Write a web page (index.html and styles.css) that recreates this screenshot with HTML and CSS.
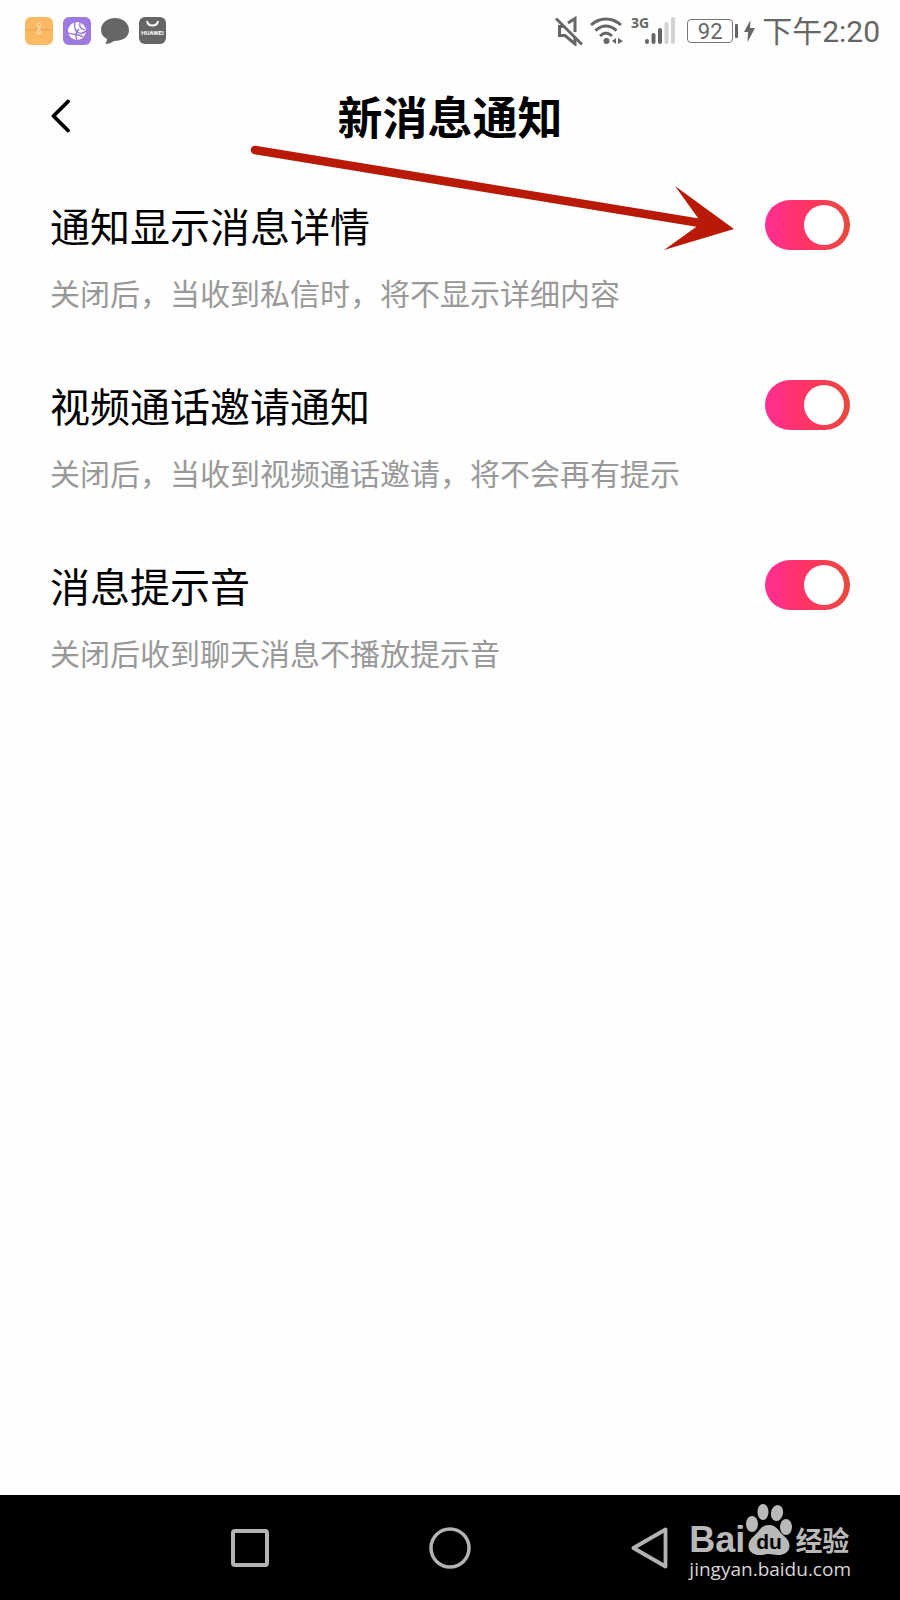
FILE: index.html
```html
<!DOCTYPE html>
<html lang="zh-CN">
<head>
    <meta charset="UTF-8">
    <meta name="viewport" content="width=device-width, initial-scale=1.0">
    <title>新消息通知</title>
    <link rel="stylesheet" href="styles.css">
</head>
<body>

    <div class="status-bar">
        <div class="status-apps">
            <svg width="28" height="28" viewBox="0 0 28 28">
                <rect width="28" height="28" rx="6" fill="#fbb962"/>
                <path d="M0 13h28" stroke="#dda65f"/>
                <g fill="none" stroke="#ffe3bb">
                    <circle cx="14" cy="8" r="2"/>
                    <circle cx="14" cy="15" r="2"/>
                    <path d="M14 10v3"/>
                </g>
            </svg>
            <svg width="28" height="28" viewBox="0 0 28 28">
                <rect width="28" height="28" rx="6" fill="#9d7ae0"/>
                <circle cx="14" cy="14" r="9" fill="#fff"/>
                <path d="M12 5c-1 6 1 10 4 11 3 1 5 0 7-2M17 6c-1 4 1 6 5 7M5 16c6 2 11 1 15 4M14 23c-2-4-1-8 2-11" fill="none" stroke="#8c66d4" stroke-width="1.2"/>
            </svg>
            <svg width="28" height="28" viewBox="0 0 28 28">
                <path d="M14 1C6 1 0 6 0 13c0 4 2 7 6 9 0 2-1 4-2 5 4 0 6-1 9-3 9 0 15-4 15-11S22 1 14 1z" fill="#666"/>
            </svg>
            <svg width="27" height="28" viewBox="0 0 27 28">
                <rect width="27" height="27" rx="6" fill="#666"/>
                <path d="M8 4c1 6 10 6 11 0" fill="none" stroke="#fff" stroke-width="1.8"/>
                <text x="13.5" y="18" class="huawei">HUAWEI</text>
            </svg>
        </div>

        <div class="status-info">
            <svg width="28" height="30" viewBox="0 0 28 30">
                <g fill="none" stroke="#666" stroke-width="3">
                    <path d="M8 10.500H4.500v9H10l10 8.500v-7M13 7l7-4.500V16"/>
                    <path d="M1 2.500l26 26"/>
                </g>
            </svg>
            <svg class="wifi" width="34" height="30" viewBox="0 0 34 30">
                <g fill="none" stroke="#666" stroke-width="3">
                    <path d="M1 9c9-8 21-8 30 0M5.500 14.500c7-6 14-6 21 0M10 20c4-4 8-4 12 0"/>
                </g>
                <circle cx="16.500" cy="25" r="3" fill="#666"/>
                <path d="M26 22v6l-4-3zM28 22v6l5-3z" fill="#666"/>
            </svg>
            <svg class="signal" width="46" height="42" viewBox="-2 -6 46 42">
                <text x="0" y="12" class="network">3G</text>
                <g stroke="#666" stroke-width="4" stroke-linecap="round">
                    <path d="M16 25v1M22.500 19v7M29 14v12"/>
                    <path d="M35.500 8v18M42 3v23" stroke="#d2d2d2"/>
                </g>
            </svg>
            <div class="battery">92</div>
            <svg class="bolt" width="11" height="24" viewBox="0 0 11 24">
                <path d="M6.500 1L0 13h4L3.500 23 11 9H6z" fill="#666"/>
            </svg>
            <span class="clock">下午2:20</span>
        </div>
    </div>

    <header class="header">
        <button class="back" aria-label="返回">
            <svg width="20" height="34" viewBox="0 0 20 34">
                <path d="M18 2.500L3.500 17 18 31.500" fill="none" stroke="#000" stroke-width="3.800" stroke-linecap="round" stroke-linejoin="round"/>
            </svg>
        </button>
        <h1>新消息通知</h1>
    </header>

    <main class="settings">
        <div class="setting">
            <div class="setting-text">
                <label for="detail">通知显示消息详情</label>
                <p>关闭后，当收到私信时，将不显示详细内容</p>
            </div>
            <input type="checkbox" id="detail" class="toggle" checked>
        </div>
        <div class="setting">
            <div class="setting-text">
                <label for="video">视频通话邀请通知</label>
                <p>关闭后，当收到视频通话邀请，将不会再有提示</p>
            </div>
            <input type="checkbox" id="video" class="toggle" checked>
        </div>
        <div class="setting">
            <div class="setting-text">
                <label for="sound">消息提示音</label>
                <p>关闭后收到聊天消息不播放提示音</p>
            </div>
            <input type="checkbox" id="sound" class="toggle" checked>
        </div>

        <!-- arrow pointing at the first switch -->
        <svg class="arrow" width="490" height="110" viewBox="0 0 490 110">
            <path d="M10 10L455 83" stroke="#b91a08" stroke-width="8.500" stroke-linecap="round"/>
            <path d="M430 46L489 89 419 110 451 87 453 78z" fill="#b91a08"/>
        </svg>
    </main>

    <nav class="nav-bar">
        <button aria-label="最近任务">
            <svg width="42" height="42" viewBox="0 0 42 42">
                <rect x="4" y="4" width="34" height="34" rx="2" fill="none" stroke="#b3b3b3" stroke-width="4"/>
            </svg>
        </button>
        <button aria-label="主页">
            <svg width="42" height="42" viewBox="0 0 42 42">
                <circle cx="21" cy="21" r="19" fill="none" stroke="#b3b3b3" stroke-width="3.500"/>
            </svg>
        </button>
        <button aria-label="返回">
            <svg width="42" height="42" viewBox="0 0 42 42">
                <path d="M36.500 2.500v37L4.500 21z" fill="none" stroke="#b3b3b3" stroke-width="3.800" stroke-linejoin="round"/>
            </svg>
        </button>

        <div class="watermark">
            <div class="brand">
                <span class="bai">Bai</span>
                <svg width="48" height="52" viewBox="0 0 48 52">
                    <g fill="#b9b9b9">
                        <ellipse cx="7" cy="20" rx="6" ry="8"/>
                        <ellipse cx="18" cy="8" rx="5.500" ry="8"/>
                        <ellipse cx="32" cy="9" rx="6" ry="8" transform="rotate(12 32 9)"/>
                        <ellipse cx="41" cy="23" rx="6" ry="8"/>
                        <path d="M24 21c-8 0-9 6-15 11-9 7-7 19 6 19 4 0 6-1 9-1s5 1 9 1c13 0 15-12 6-19-6-5-7-11-15-11z"/>
                    </g>
                    <text x="24" y="45" class="du">du</text>
                </svg>
                <span class="jingyan">经验</span>
            </div>
            <div class="site">jingyan.baidu.com</div>
        </div>
    </nav>

</body>
</html>
```

FILE: styles.css
```css
* {
    box-sizing: border-box;
}
body {
    font-family: Roboto, "Noto Sans CJK SC", sans-serif;
    background: #fefefe;
    color: #000;
    margin: 0;
    min-height: 100vh;
    display: flex;
    flex-direction: column;
}
button {
    border: 0;
    padding: 0;
    background: none;
    cursor: pointer;
}
svg {
    display: block;
    flex: none;
}
.status-bar {
    height: 62px;
    padding: 0 20px 0 25px;
    display: flex;
    justify-content: space-between;
    align-items: center;
    color: #666;
}
.status-apps {
    display: flex;
    gap: 10px;
}
.status-info {
    display: flex;
    align-items: center;
}
.huawei {
    font-size: 6px;
    font-weight: bold;
    fill: #fff;
    text-anchor: middle;
}
.wifi {
    margin-left: 7px;
}
.signal {
    margin-left: 5px;
}
.network {
    font-family: "Liberation Sans Narrow", "Open Sans", sans-serif;
    font-size: 14px;
    font-weight: bold;
    fill: #666;
}
.battery {
    position: relative;
    width: 46px;
    height: 24px;
    margin-left: 12px;
    border: 1px solid #777;
    border-radius: 4px;
    font-size: 22px;
    line-height: 23px;
    text-align: center;
}
.battery::after {
    content: "";
    position: absolute;
    right: -6px;
    top: 4px;
    width: 3px;
    height: 14px;
    border-radius: 1px;
    background: #666;
}
.bolt {
    margin-left: 11px;
}
.clock {
    margin-left: 7px;
    padding-top: 2px;
    font-size: 30px;
    line-height: 40px;
}
.header {
    height: 108px;
    padding: 0 50px;
    display: grid;
    grid-template-columns: 50px 1fr 50px;
    align-items: center;
}
.header h1 {
    margin: 0;
    padding-top: 8px;
    font-size: 45px;
    line-height: 60px;
    text-align: center;
}
.settings {
    position: relative;
    flex: 1;
    padding: 0 50px;
}
.setting {
    height: 180px;
    padding-top: 30px;
    display: flex;
    justify-content: space-between;
    align-items: flex-start;
}
.setting-text label {
    display: block;
    font-size: 40px;
    line-height: 58px;
}
.setting-text p {
    margin: 17px 0 0;
    font-size: 30px;
    line-height: 40px;
    color: #999;
}
.toggle {
    appearance: none;
    position: relative;
    flex: none;
    width: 85px;
    height: 50px;
    margin: 0;
    border-radius: 25px;
    background: #ccc;
    cursor: pointer;
}
.toggle::after {
    content: "";
    position: absolute;
    top: 5px;
    left: 5px;
    width: 40px;
    height: 40px;
    border-radius: 50%;
    background: #fff;
}
.toggle:checked {
    background: linear-gradient(to right, #ff2e93, #ff3563 50%, #e84a3c);
}
.toggle:checked::after {
    left: 39px;
}
.arrow {
    position: absolute;
    top: -30px;
    right: 165px;
    overflow: visible;
    pointer-events: none;
}
.nav-bar {
    position: relative;
    height: 105px;
    display: flex;
    justify-content: center;
    background: #000;
}
.nav-bar button {
    width: 200px;
    display: flex;
    justify-content: center;
    align-items: center;
}
.watermark {
    position: absolute;
    right: 49px;
    top: 9px;
    color: #b9b9b9;
}
.brand {
    display: flex;
    align-items: flex-end;
}
.bai {
    font-family: "Liberation Sans", sans-serif;
    font-size: 36px;
    font-weight: bold;
    line-height: 32px;
}
.du {
    font-family: "Liberation Sans", sans-serif;
    font-size: 21px;
    font-weight: bold;
    fill: #000;
    text-anchor: middle;
}
.jingyan {
    margin-left: 2px;
    font-size: 27px;
    font-weight: bold;
    line-height: 28px;
}
.site {
    font-family: "Open Sans", sans-serif;
    font-size: 19px;
    line-height: 26px;
    color: #d6d6d6;
}
```
